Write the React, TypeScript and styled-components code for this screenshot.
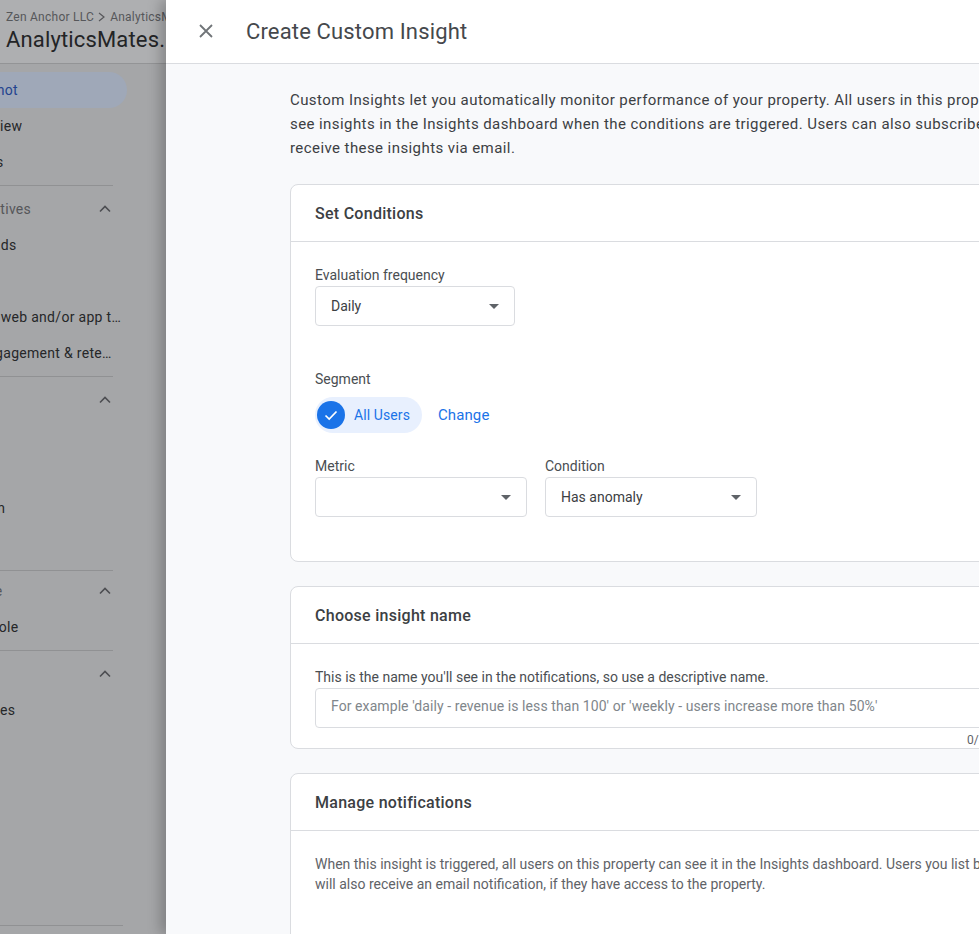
import React from "react";
import styled, { createGlobalStyle } from "styled-components";

const Global = createGlobalStyle`
  html, body { margin: 0; padding: 0; background: #a5a6a8; }
  body { font-family: Roboto, "Liberation Sans", sans-serif; overflow: hidden; }
  * { box-sizing: border-box; }
`;

const Page = styled.div`
  display: flex;
  width: 979px;
  height: 934px;
  overflow: hidden;
`;

const Sidebar = styled.aside`
  flex: 0 0 166px;
  width: 166px;
  display: flex;
  flex-direction: column;
  overflow: hidden;
  background: #a5a6a8;
`;

const SideHeader = styled.header`
  height: 64px;
  flex: none;
  padding: 10px 0 0 6px;
  background: #aeafb1;
  border-bottom: 1px solid #939496;
  white-space: nowrap;
`;

const Crumbs = styled.div`
  font-size: 12px;
  line-height: 14px;
  letter-spacing: 0.25px;
  color: #56575a;
  display: flex;
  align-items: center;
  gap: 3px;
`;

const CrumbArrow = styled.svg`
  flex: none;
  width: 9px;
  height: 10px;
  margin-right: 1px;
  fill: none;
  stroke: #56575a;
  stroke-width: 1.2;
`;

const Property = styled.div`
  font-size: 22px;
  line-height: 30px;
  letter-spacing: 0.15px;
  color: #232426;
  margin-top: 1px;
`;

const Nav = styled.nav`
  flex: 1;
  display: flex;
  flex-direction: column;
  padding-top: 8px;
`;

const Row = styled.div<{ $active?: boolean }>`
  height: 36px;
  flex: none;
  width: ${(p) => (p.$active ? "127px" : "113px")};
  display: flex;
  align-items: center;
  justify-content: space-between;
  border-radius: ${(p) => (p.$active ? "0 18px 18px 0" : "0")};
  background: ${(p) => (p.$active ? "#9fa8b8" : "transparent")};
  color: ${(p) => (p.$active ? "#23448f" : "#262729")};
  font-size: 14px;
`;

const Label = styled.span<{ $offset: number; $muted?: boolean; $max?: number }>`
  flex: none;
  max-width: ${(p) => p.$max ?? 240}px;
  margin-left: ${(p) => p.$offset}px;
  white-space: nowrap;
  overflow: hidden;
  text-overflow: ellipsis;
  letter-spacing: 0.3px;
  color: ${(p) => (p.$muted ? "#55565a" : "inherit")};
`;

const Chevron = styled.svg`
  flex: none;
  width: 12px;
  height: 8px;
  margin-right: 2px;
  margin-left: -60px;
  fill: none;
  stroke: #4d4e52;
  stroke-width: 1.6;
`;

const SideRule = styled.div<{ $above: number; $below: number }>`
  flex: none;
  width: 113px;
  height: 1px;
  background: #909193;
  margin: ${(p) => p.$above}px 0 ${(p) => p.$below}px;
`;

const SideFooter = styled.div`
  margin-top: auto;
  margin-bottom: 8px;
  width: 123px;
  height: 1px;
  background: #909193;
`;

const Panel = styled.main`
  flex: 1;
  min-width: 0;
  position: relative;
  display: flex;
  flex-direction: column;
  background: #f8f9fb;
  box-shadow: -6px 0 12px rgba(0, 0, 0, 0.22);
`;

const PanelHeader = styled.header`
  height: 64px;
  flex: none;
  display: flex;
  align-items: center;
  background: #fff;
  border-bottom: 1px solid #dadce0;
  padding: 0 0 2px 32px;
`;

const CloseIcon = styled.svg`
  width: 16px;
  height: 16px;
  fill: none;
  stroke: #707478;
  stroke-width: 1.8;
  margin-right: 32px;
`;

const Title = styled.h1`
  margin: 2px 0 0;
  font-size: 22px;
  font-weight: 400;
  letter-spacing: 0.15px;
  color: #45484c;
  white-space: nowrap;
`;

const Content = styled.div`
  flex: 1;
  width: 800px;
  margin-left: 124px;
  padding-top: 24px;
`;

const Intro = styled.p`
  margin: 0 0 24px;
  white-space: nowrap;
  font-size: 15px;
  line-height: 24px;
  letter-spacing: 0.42px;
  color: #3c4043;
`;

const Card = styled.section<{ $height: number }>`
  height: ${(p) => p.$height}px;
  background: #fff;
  border: 1px solid #dadce0;
  border-radius: 8px;
  margin-bottom: 24px;
`;

const CardTitle = styled.h2`
  margin: 0;
  height: 57px;
  padding: 0 24px;
  display: flex;
  align-items: center;
  font-size: 16px;
  font-weight: 500;
  letter-spacing: 0.27px;
  color: #3c4043;
  border-bottom: 1px solid #dadce0;
`;

const CardBody = styled.div<{ $top: number }>`
  padding: ${(p) => p.$top}px 24px 0;
  display: flex;
  flex-direction: column;
`;

const FieldLabel = styled.div`
  font-size: 14px;
  line-height: 20px;
  color: #4a4e52;
  margin-bottom: 1px;
`;

const Select = styled.div<{ $width: number }>`
  width: ${(p) => p.$width}px;
  height: 40px;
  padding: 0 15px;
  display: flex;
  align-items: center;
  justify-content: space-between;
  font-size: 14px;
  color: #3c4043;
  background: #fff;
  border: 1px solid #dadce0;
  border-radius: 4px;
`;

const Caret = styled.i`
  width: 0;
  height: 0;
  border-left: 5px solid transparent;
  border-right: 5px solid transparent;
  border-top: 5px solid #5f6368;
`;

const SegmentBlock = styled.div`
  margin-top: 43px;
`;

const ChipRow = styled.div`
  display: flex;
  align-items: center;
  gap: 16px;
  margin-top: 8px;
`;

const Chip = styled.div`
  height: 36px;
  width: 107px;
  padding-left: 2px;
  display: flex;
  align-items: center;
  gap: 9px;
  border-radius: 18px;
  background: #e8f0fe;
  color: #1a73e8;
  font-size: 14px;
  letter-spacing: 0.1px;
`;

const CheckDisc = styled.span`
  width: 28px;
  height: 28px;
  border-radius: 50%;
  background: #1a73e8;
  display: flex;
  align-items: center;
  justify-content: center;
`;

const CheckIcon = styled.svg`
  width: 16px;
  height: 16px;
  fill: none;
  stroke: #fff;
  stroke-width: 1.7;
`;

const LinkText = styled.a`
  font-size: 15px;
  font-weight: 400;
  letter-spacing: 0.1px;
  color: #1a73e8;
`;

const FieldPair = styled.div`
  display: flex;
  gap: 18px;
  margin-top: 23px;
`;

const NameInput = styled.div`
  height: 40px;
  padding: 0 15px 4px;
  display: flex;
  align-items: center;
  font-size: 14px;
  letter-spacing: 0.08px;
  color: #80868b;
  border: 1px solid #dadce0;
  border-radius: 4px;
  white-space: nowrap;
`;

const Counter = styled.div`
  font-size: 12px;
  line-height: 14px;
  margin: 5px 0 0 652px;
  color: #5f6368;
`;

const Help = styled.p`
  margin: 0;
  font-size: 14px;
  line-height: 20px;
  color: #5f6368;
  white-space: nowrap;
`;

const Up = () => (
  <Chevron viewBox="0 0 12 8">
    <path d="M1 6.5 L6 1.5 L11 6.5" />
  </Chevron>
);

const Select2 = ({ width, value }: { width: number; value?: string }) => (
  <Select $width={width}>
    <span>{value}</span>
    <Caret />
  </Select>
);

export default function App() {
  return (
    <Page>
      <Global />
      <Sidebar>
        <SideHeader>
          <Crumbs>
            Zen Anchor LLC
            <CrumbArrow viewBox="0 0 9 10">
              <path d="M2 1 L7 5 L2 9" />
            </CrumbArrow>
            AnalyticsMates
          </Crumbs>
          <Property>AnalyticsMates.</Property>
        </SideHeader>
        <Nav>
          <Row $active><Label $offset={-97}>Reports snapshot</Label></Row>
          <Row><Label $offset={-96}>Realtime overview</Label></Row>
          <Row><Label $offset={-97}>Realtime pages</Label></Row>
          <SideRule $above={5} $below={5} />
          <Row><Label $muted $offset={-98}>Business objectives</Label><Up /></Row>
          <Row><Label $offset={-81}>Generate leads</Label></Row>
          <Row><Label $offset={-81}>Drive sales</Label></Row>
          <Row><Label $offset={-78} $max={201}>Understand web and/or app traffic</Label></Row>
          <Row><Label $offset={-88} $max={206}>View user engagement &amp; retention</Label></Row>
          <SideRule $above={5} $below={5} />
          <Row><Label $muted $offset={-97}>Life cycle</Label><Up /></Row>
          <Row><Label $offset={-81}>Acquisition</Label></Row>
          <Row><Label $offset={-85}>Engagement</Label></Row>
          <Row><Label $offset={-80}>Monetization</Label></Row>
          <Row><Label $offset={-81}>Retention</Label></Row>
          <SideRule $above={8} $below={2} />
          <Row><Label $muted $offset={-99}>Search Console</Label><Up /></Row>
          <Row><Label $offset={-83}>Search Console</Label></Row>
          <SideRule $above={5} $below={5} />
          <Row><Label $muted $offset={-97}>User</Label><Up /></Row>
          <Row><Label $offset={-81}>User attributes</Label></Row>
          <SideFooter />
        </Nav>
      </Sidebar>
      <Panel>
        <PanelHeader>
          <CloseIcon viewBox="0 0 16 16">
            <path d="M2 2 L14 14 M14 2 L2 14" />
          </CloseIcon>
          <Title>Create Custom Insight</Title>
        </PanelHeader>
        <Content>
          <Intro>
            Custom Insights let you automatically monitor performance of your property. All users in this property can
            <br />
            see insights in the Insights dashboard when the conditions are triggered. Users can also subscribe to
            <br />
            receive these insights via email.
          </Intro>
          <Card $height={378}>
            <CardTitle>Set Conditions</CardTitle>
            <CardBody $top={23}>
              <FieldLabel>Evaluation frequency</FieldLabel>
              <Select2 width={200} value="Daily" />
              <SegmentBlock>
                <FieldLabel>Segment</FieldLabel>
                <ChipRow>
                  <Chip>
                    <CheckDisc>
                      <CheckIcon viewBox="0 0 16 16">
                        <path d="M2.5 8.5 L6.2 12 L13.5 4.5" />
                      </CheckIcon>
                    </CheckDisc>
                    All Users
                  </Chip>
                  <LinkText>Change</LinkText>
                </ChipRow>
              </SegmentBlock>
              <FieldPair>
                <div>
                  <FieldLabel>Metric</FieldLabel>
                  <Select2 width={212} />
                </div>
                <div>
                  <FieldLabel>Condition</FieldLabel>
                  <Select2 width={212} value="Has anomaly" />
                </div>
              </FieldPair>
            </CardBody>
          </Card>
          <Card $height={163}>
            <CardTitle>Choose insight name</CardTitle>
            <CardBody $top={23}>
              <FieldLabel>This is the name you'll see in the notifications, so use a descriptive name.</FieldLabel>
              <NameInput>For example 'daily - revenue is less than 100' or 'weekly - users increase more than 50%'</NameInput>
              <Counter>0/100</Counter>
            </CardBody>
          </Card>
          <Card $height={300}>
            <CardTitle>Manage notifications</CardTitle>
            <CardBody $top={23}>
              <Help>
                When this insight is triggered, all users on this property can see it in the Insights dashboard. Users
                you list below
                <br />
                will also receive an email notification, if they have access to the property.
              </Help>
            </CardBody>
          </Card>
        </Content>
      </Panel>
    </Page>
  );
}
